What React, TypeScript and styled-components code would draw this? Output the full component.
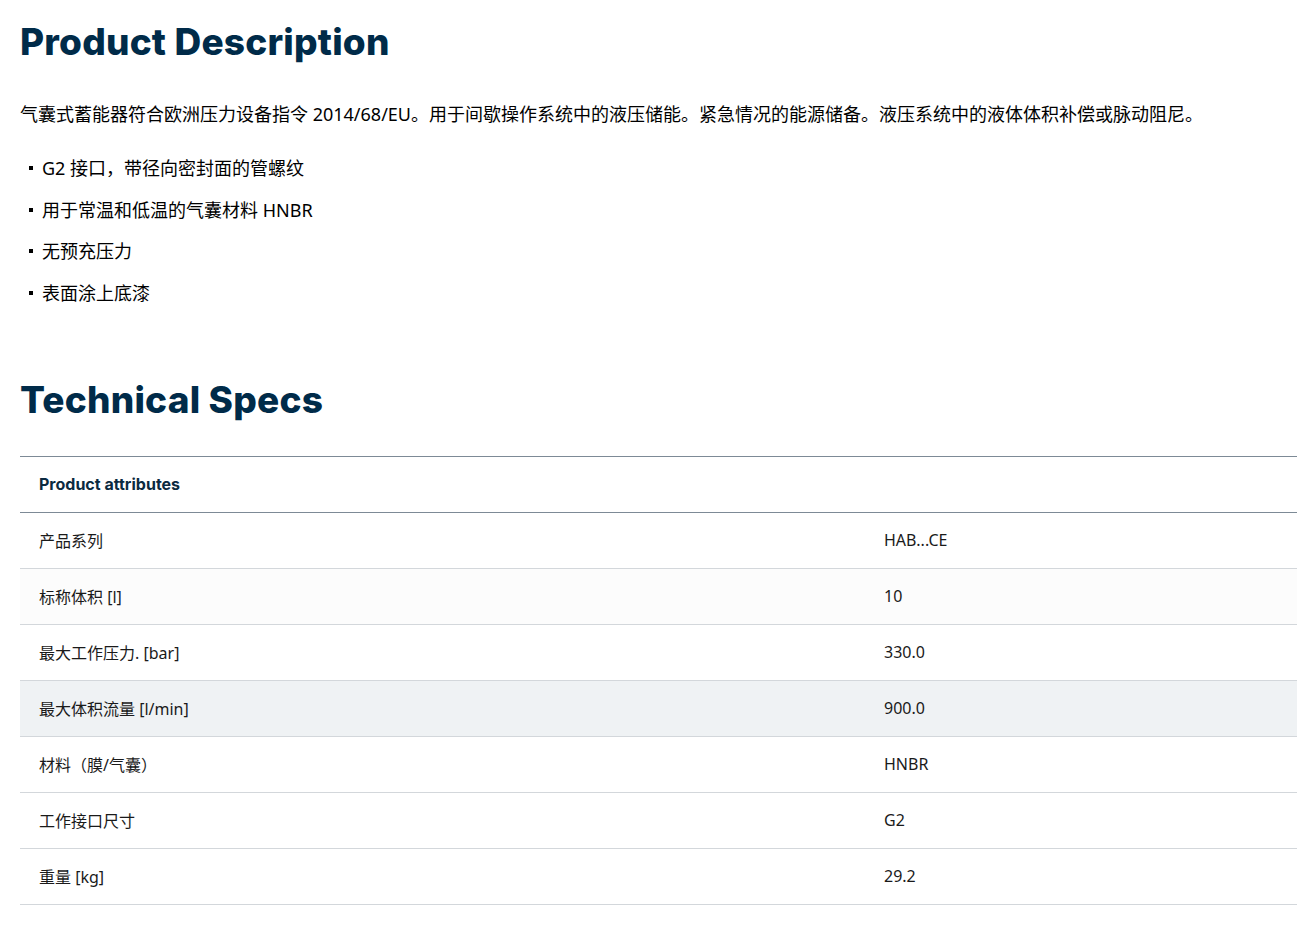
import React from "react";
import styled, { createGlobalStyle } from "styled-components";

const Global = createGlobalStyle`
  body { margin: 0; background: #fff; font-family: "Noto Sans", "Noto Sans CJK SC", sans-serif; color: #000; }
`;
const Page = styled.div` padding: 0 0 40px 20px; `;
const H2 = styled.h2<{ $top: number }>`
  font-family: Inter, "Noto Sans", sans-serif; font-weight: 800; font-size: 37px; line-height: 44px;
  color: #002b49; margin: ${p => p.$top}px 0 0 0; letter-spacing: 0.2px;
`;
const Para = styled.p` font-size: 18px; line-height: 24px; margin: 38px 0 0 0; `;
const List = styled.ul` list-style: none; margin: 30px 0 0 0; padding: 0 0 0 9px; display: flex; flex-direction: column; gap: 17.5px; `;
const Item = styled.li`
  font-size: 18px; line-height: 24px; display: flex; align-items: center; gap: 9px;
  &::before { content: ""; width: 4px; height: 4px; background: #000; }
`;
const Table = styled.div` margin-top: 34px; border-top: 1px solid #7d8a96; `;
const Row = styled.div<{ $bg?: string; $head?: boolean }>`
  display: grid; grid-template-columns: 845px 1fr; height: 56px; align-items: center;
  background: ${p => p.$bg || "#fff"};
  border-bottom: 1px solid ${p => (p.$head ? "#7d8a96" : "#d3d7db")};
  box-sizing: border-box;
`;
const Cell = styled.div<{ $head?: boolean }>`
  padding-left: 19px; font-size: 16px;
  font-family: ${p => (p.$head ? 'Inter, "Noto Sans", sans-serif' : '"Noto Sans", "Noto Sans CJK SC", sans-serif')};
  font-weight: ${p => (p.$head ? 700 : 400)}; color: ${p => (p.$head ? "#0b2a40" : "#1a1a1a")};
`;

const rows: [string, string, string?][] = [
  ["产品系列", "HAB...CE"],
  ["标称体积 [l]", "10", "#fcfcfc"],
  ["最大工作压力. [bar]", "330.0"],
  ["最大体积流量 [l/min]", "900.0", "#eff2f4"],
  ["材料（膜/气囊）", "HNBR"],
  ["工作接口尺寸", "G2"],
  ["重量 [kg]", "29.2"],
];

export default function App() {
  return (
    <Page>
      <Global />
      <H2 $top={20}>Product Description</H2>
      <Para>气囊式蓄能器符合欧洲压力设备指令 2014/68/EU。用于间歇操作系统中的液压储能。紧急情况的能源储备。液压系统中的液体体积补偿或脉动阻尼。</Para>
      <List>
        <Item>G2 接口，带径向密封面的管螺纹</Item>
        <Item>用于常温和低温的气囊材料 HNBR</Item>
        <Item>无预充压力</Item>
        <Item>表面涂上底漆</Item>
      </List>
      <H2 $top={73}>Technical Specs</H2>
      <Table>
        <Row $head><Cell $head>Product attributes</Cell></Row>
        {rows.map(([k, v, bg]) => (
          <Row key={k} $bg={bg}><Cell>{k}</Cell><Cell>{v}</Cell></Row>
        ))}
      </Table>
    </Page>
  );
}
